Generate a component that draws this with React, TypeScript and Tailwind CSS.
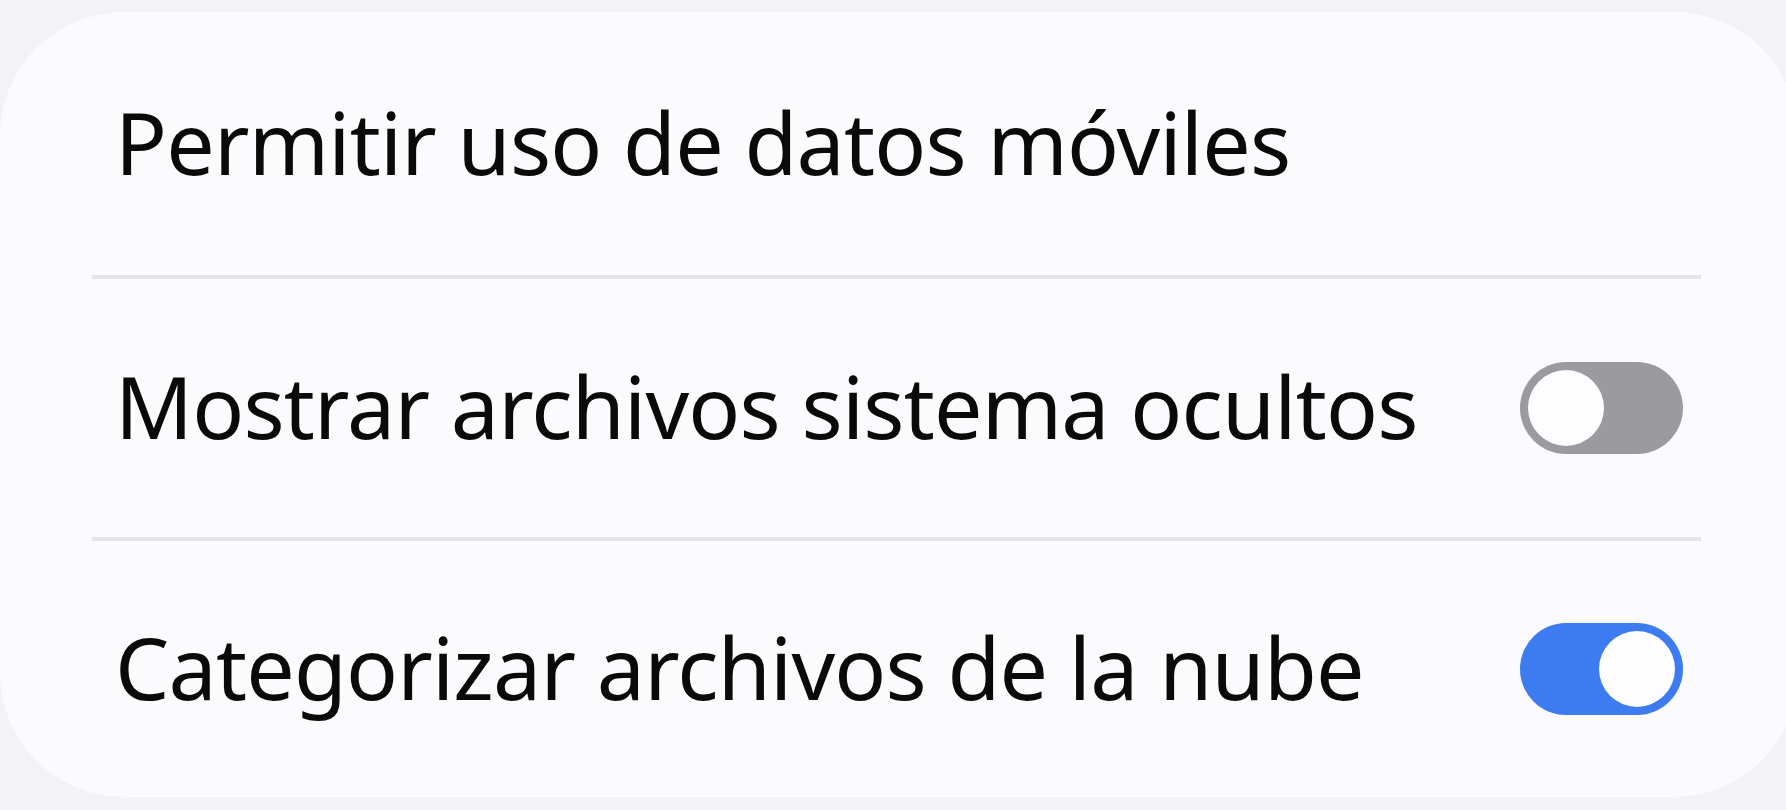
import { useState } from "react"

type Row = { id: string; label: string; toggle?: boolean; height: string }

const rows: Row[] = [
  { id: "mobile", label: "Permitir uso de datos móviles", height: "h-[263px]" },
  { id: "hidden", label: "Mostrar archivos sistema ocultos", toggle: false, height: "h-[258px]" },
  { id: "cloud", label: "Categorizar archivos de la nube", toggle: true, height: "h-[256px]" },
]

function Switch({ on, onChange }: { on: boolean; onChange: () => void }) {
  return (
    <button
      onClick={onChange}
      className={`flex h-[92px] w-[163px] shrink-0 items-center rounded-full px-[8px] ${
        on ? "justify-end bg-[#3d7bf1]" : "justify-start bg-[#9b9b9f]"
      }`}
    >
      <span className="block h-[76px] w-[76px] rounded-full bg-[#fdfdff]" />
    </button>
  )
}

export default function App() {
  const [values, setValues] = useState<Record<string, boolean>>({ hidden: false, cloud: true })

  return (
    <div className="h-[810px] w-[1786px] overflow-hidden bg-[#f3f3f5] pt-[12px]">
      <div className="mr-[-12px] rounded-[124px] bg-[#fbfbfd]">
        {rows.map((row, i) => (
          <div key={row.id}>
            {i > 0 && <div className="ml-[92px] mr-[97px] h-[4px] bg-[#e6e6e8]" />}
            <div className={`flex items-center justify-between pl-[115px] pr-[115px] ${row.height}`}>
              <span className="mt-[-4px] text-[86px] leading-none tracking-[-0.8px] text-[#0a0a0a] [font-family:'Noto_Sans',sans-serif]">
                {row.label}
              </span>
              {row.toggle !== undefined && (
                <Switch
                  on={values[row.id]}
                  onChange={() => setValues((p) => ({ ...p, [row.id]: !p[row.id] }))}
                />
              )}
            </div>
          </div>
        ))}
      </div>
    </div>
  )
}
